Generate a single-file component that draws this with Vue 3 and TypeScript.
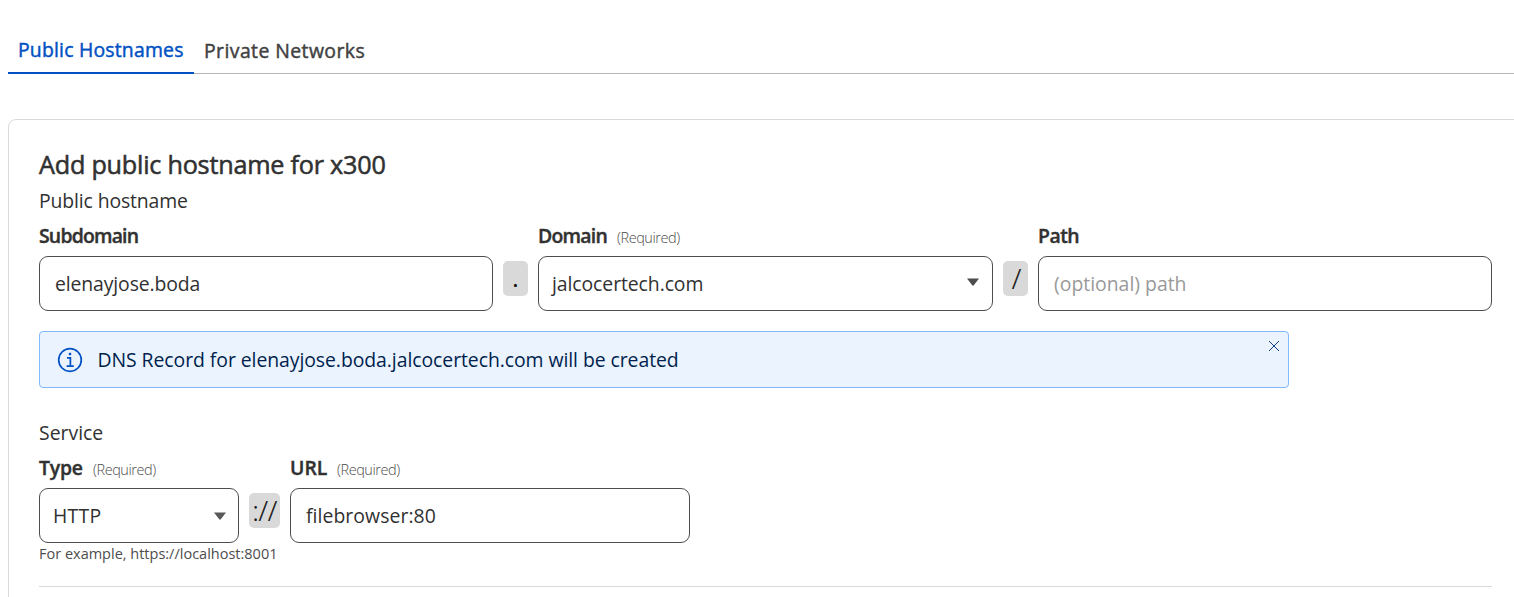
<script setup lang="ts">
import { ref } from 'vue'

const subdomain = ref('elenayjose.boda')
const domain = ref('jalcocertech.com')
const path = ref('')
const serviceType = ref('HTTP')
const url = ref('filebrowser:80')
</script>

<template>
  <main class="page">
    <nav class="tabs">
      <a class="tab active"><span class="tab-public">Public Hostnames</span></a>
      <a class="tab"><span class="tab-private">Private Networks</span></a>
    </nav>
    <section class="card">
      <h1>Add public hostname for x300</h1>
      <p class="group g-host">Public hostname</p>
      <div class="row host-row">
        <div class="field">
          <label><b class="l-sub">Subdomain</b></label>
          <div class="box"><span class="v-sub">{{ subdomain }}</span></div>
        </div>
        <div class="sep dot">.</div>
        <div class="field">
          <label><b class="l-dom">Domain</b><small>(Required)</small></label>
          <div class="box select domain-select">
            <span class="v-dom">{{ domain }}</span>
            <svg class="caret" width="12" height="8" viewBox="0 0 12 8"><path d="M0 .5h12L6.8 7.2q-.8.9-1.6 0Z" fill="#4d4d4d" /></svg>
          </div>
        </div>
        <div class="sep slash">/</div>
        <div class="field">
          <label><b class="l-path">Path</b></label>
          <div class="box"><span class="placeholder">{{ path || '(optional) path' }}</span></div>
        </div>
      </div>
      <div class="notice">
        <svg class="info" width="26" height="26" viewBox="0 0 26 26" fill="none" stroke="#0051c3"><circle cx="13" cy="13" r="11.3" stroke-width="1.7" /><path d="M10 10.8h3.4v8M9.6 19.1h7.2" stroke-width="1.7" /><path d="M11.8 5.8h2.4v2.4h-2.4z" fill="#0051c3" stroke="none" /></svg>
        <span class="v-dns">DNS Record for {{ subdomain }}.{{ domain }} will be created</span>
        <svg class="close" width="12" height="12" viewBox="0 0 12 12"><path d="M1 1l10 10M11 1L1 11" stroke="#0a3f91" stroke-width="1" /></svg>
      </div>
      <p class="group service">Service</p>
      <div class="row svc-row">
        <div class="field">
          <label><b class="l-type">Type</b><small>(Required)</small></label>
          <div class="box select type-select">
            <span class="v-http">{{ serviceType }}</span>
            <svg class="caret" width="12" height="8" viewBox="0 0 12 8"><path d="M0 .5h12L6.8 7.2q-.8.9-1.6 0Z" fill="#595959" /></svg>
          </div>
        </div>
        <div class="sep scheme">://</div>
        <div class="field">
          <label><b class="l-url">URL</b><small>(Required)</small></label>
          <div class="box"><span class="v-url">{{ url }}</span></div>
        </div>
      </div>
      <p class="hint">For example, https://localhost:8001</p>
      <hr />
    </section>
  </main>
</template>

<style>
body { background: #fff; overflow: hidden; }
</style>

<style scoped>
.page { height: 597px; overflow: hidden; box-sizing: border-box; padding: 28px 0 0 8px; font-family: "Open Sans", "Noto Sans", sans-serif; font-size: 19.4px; color: #313131; white-space: nowrap; }
.page * { box-sizing: border-box; }
.tabs { display: flex; height: 46px; border-bottom: 1px solid #b6b6b6; }
.tab { display: block; height: 46px; padding: 1px 10px 0; line-height: 44px; -webkit-text-stroke: .45px; color: #414141; }
.tab.active { width: 186px; padding-top: 0; color: #0051c3; border-bottom: 2px solid #0051c3; }
.tab-public { letter-spacing: .2px; }
.tab-private { letter-spacing: .43px; }
.card { width: 1516px; height: 600px; margin-top: 45px; padding: 27px 31px 0 30px; border: 1px solid #d9d9d9; border-radius: 8px; }
h1 { margin: 0; font-size: 25.2px; line-height: 34px; font-weight: 400; -webkit-text-stroke: .55px; letter-spacing: -.22px; }
.group { margin: 3px 0 0; line-height: 34px; }
.g-host { letter-spacing: -.13px; }
.row { display: grid; }
.host-row { width: 1453px; grid-template-columns: 454px 45px 455px 45px 454px; }
.svc-row { grid-template-columns: 200px 51px 400px; }
label { display: flex; align-items: baseline; gap: 10px; height: 38px; line-height: 36px; }
b { font-weight: 600; -webkit-text-stroke: .4px; }
.l-sub { letter-spacing: -.8px; }
.l-dom { letter-spacing: -.75px; width: 69px; }
.l-path { letter-spacing: -.5px; }
.l-type { width: 44px; letter-spacing: -.2px; }
.l-url { width: 37px; }
small { font-size: 14.5px; font-weight: 300; letter-spacing: -.45px; color: #4d4d4d; }
.box { display: flex; align-items: center; height: 55px; padding: 0 15px; border: 1px solid #4d4d4d; border-radius: 9px; }
.select { justify-content: space-between; padding: 0 13px; }
.domain-select .caret { margin-bottom: 3px; }
.type-select { padding-right: 12px; }
.v-sub { letter-spacing: -.12px; }
.v-dom { letter-spacing: -.08px; }
.v-dns { letter-spacing: -.06px; }
.v-http { letter-spacing: .3px; }
.v-url { letter-spacing: .06px; }
.sep { justify-self: center; width: 25px; height: 35px; margin-top: 43px; border-radius: 5px; background: #d9d9d9; text-align: center; line-height: 35px; font-size: 28px; font-weight: 300; -webkit-text-stroke: .2px; color: #111; }
.dot { font-size: 24px; font-weight: 400; line-height: 33px; }
.slash { padding-left: 2px; }
.scheme { width: 31px; letter-spacing: -.4px; }
.placeholder { color: #999; }
.notice { display: flex; align-items: center; width: 1250px; height: 57px; margin-top: 20px; padding: 0 8px 0 17px; gap: 14.5px; border: 1px solid #82b6ff; border-radius: 4px; background: #ebf3ff; color: #001f4d; }
.close { margin: 0 0 28px auto; }
.service { margin-top: 28px; }
.hint { margin: 0; font-size: 14.5px; line-height: 22px; color: #4d4d4d; }
hr { height: 1px; margin: 21px 0 0; border: 0; background: #d9d9d9; }
</style>
